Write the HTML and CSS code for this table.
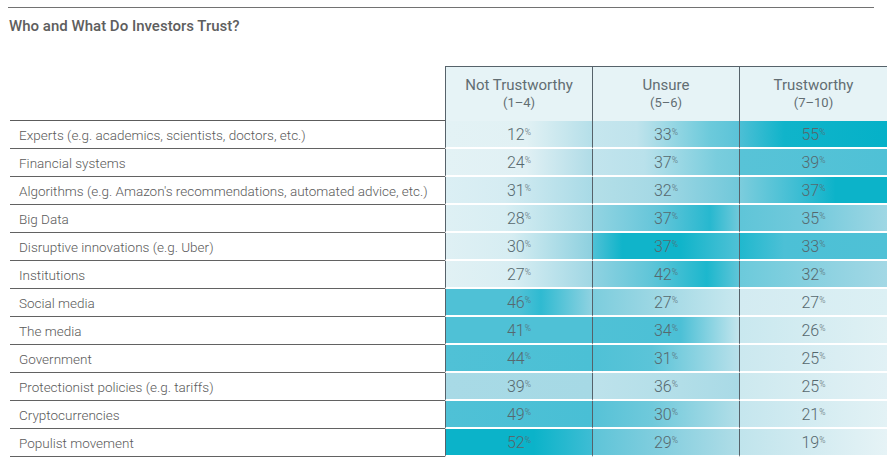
FILE: index.html
```html
<!DOCTYPE html>
<html lang="en">
<head>
<meta charset="utf-8">
<title>Who and What Do Investors Trust?</title>
<link rel="stylesheet" href="styles.css">
</head>
<body>
<div class="page">
  <div class="rule"></div>
  <h1 class="title">Who and What Do Investors Trust?</h1>
  <div class="table">
    <div class="corner"></div>
    <div class="head"><span class="h1">Not Trustworthy</span><span class="h2">(1–4)</span></div>
    <div class="head"><span class="h1">Unsure</span><span class="h2">(5–6)</span></div>
    <div class="head"><span class="h1">Trustworthy</span><span class="h2">(7–10)</span></div>

    <div class="label">Experts (e.g. academics, scientists, doctors, etc.)</div>
    <div class="val" style="background:linear-gradient(90deg,#e3f2f5 0%,#e1f1f4 55%,#b5dfe9 100%)">12<span class="pct">%</span></div>
    <div class="val" style="background:linear-gradient(90deg,#c6e6ee 0%,#bfe3ec 30%,#6ccadb 80%,#5bc3d8 100%)">33<span class="pct">%</span></div>
    <div class="val" style="background:linear-gradient(90deg,#4cbfd5 0%,#10b4ca 30%,#05b1c8 100%)">55<span class="pct">%</span></div>

    <div class="label">Financial systems</div>
    <div class="val" style="background:linear-gradient(90deg,#e3f2f5 0%,#e0f0f4 55%,#b0dce7 100%)">24<span class="pct">%</span></div>
    <div class="val" style="background:linear-gradient(90deg,#c2e4ed 0%,#b9e1eb 35%,#79cddd 85%,#72cadb 100%)">37<span class="pct">%</span></div>
    <div class="val" style="background:linear-gradient(90deg,#58c3d7 0%,#4fc1d6 100%)">39<span class="pct">%</span></div>

    <div class="label">Algorithms (e.g. Amazon's recommendations, automated advice, etc.)</div>
    <div class="val" style="background:linear-gradient(90deg,#dbeff4 0%,#d5ecf2 40%,#a8dae6 100%)">31<span class="pct">%</span></div>
    <div class="val" style="background:linear-gradient(90deg,#b4dfe8 0%,#a6d9e5 40%,#70c8da 100%)">32<span class="pct">%</span></div>
    <div class="val" style="background:linear-gradient(90deg,#7ccddd 0%,#3cbdd3 40%,#0cb3c9 65%,#0cb3c9 100%)">37<span class="pct">%</span></div>

    <div class="label">Big Data</div>
    <div class="val" style="background:linear-gradient(90deg,#def0f4 0%,#d8eef3 40%,#a3d8e4 100%)">28<span class="pct">%</span></div>
    <div class="val" style="background:linear-gradient(90deg,#93d4e2 0%,#63c5d9 45%,#27b8cf 80%,#6fc9db 100%)">37<span class="pct">%</span></div>
    <div class="val" style="background:linear-gradient(90deg,#5fc5d8 0%,#74cadc 50%,#9fd7e4 100%)">35<span class="pct">%</span></div>

    <div class="label">Disruptive innovations (e.g. Uber)</div>
    <div class="val" style="background:linear-gradient(90deg,#dff0f4 0%,#d6edf2 45%,#8dd0df 100%)">30<span class="pct">%</span></div>
    <div class="val" style="background:linear-gradient(90deg,#4fc1d6 0%,#10b4ca 20%,#10b4ca 60%,#4fc1d6 100%)">37<span class="pct">%</span></div>
    <div class="val" style="background:linear-gradient(90deg,#20b8ce 0%,#4cc0d6 30%,#4fc1d6 100%)">33<span class="pct">%</span></div>

    <div class="label">Institutions</div>
    <div class="val" style="background:linear-gradient(90deg,#e1f1f4 0%,#d9eef3 45%,#a0d7e4 100%)">27<span class="pct">%</span></div>
    <div class="val" style="background:linear-gradient(90deg,#8fd2e1 0%,#5fc5d8 40%,#1cb7cd 78%,#5fc5d8 100%)">42<span class="pct">%</span></div>
    <div class="val" style="background:linear-gradient(90deg,#6ccadb 0%,#8ed2e1 60%,#a3d8e5 100%)">32<span class="pct">%</span></div>

    <div class="label">Social media</div>
    <div class="val" style="background:linear-gradient(90deg,#4fc1d6 0%,#4fc1d6 50%,#2fbad1 65%,#8fd2e1 100%)">46<span class="pct">%</span></div>
    <div class="val" style="background:linear-gradient(90deg,#7ccddd 0%,#a3d9e5 50%,#c9e8ef 100%)">27<span class="pct">%</span></div>
    <div class="val" style="background:linear-gradient(90deg,#d3ebf1 0%,#dcf0f4 100%)">27<span class="pct">%</span></div>

    <div class="label">The media</div>
    <div class="val" style="background:linear-gradient(90deg,#4fc1d6 0%,#4fc1d6 100%)">41<span class="pct">%</span></div>
    <div class="val" style="background:linear-gradient(90deg,#4fc1d6 0%,#4cc0d6 60%,#c3e5ed 100%)">34<span class="pct">%</span></div>
    <div class="val" style="background:linear-gradient(90deg,#c9e8ef 0%,#e0f1f4 100%)">26<span class="pct">%</span></div>

    <div class="label">Government</div>
    <div class="val" style="background:linear-gradient(90deg,#50c1d6 0%,#4bc0d5 100%)">44<span class="pct">%</span></div>
    <div class="val" style="background:linear-gradient(90deg,#4fc1d6 0%,#5bc4d8 40%,#b8e0ea 100%)">31<span class="pct">%</span></div>
    <div class="val" style="background:linear-gradient(90deg,#cbe8ef 0%,#e1f1f5 100%)">25<span class="pct">%</span></div>

    <div class="label">Protectionist policies (e.g. tariffs)</div>
    <div class="val" style="background:linear-gradient(90deg,#a8dae6 0%,#a6d9e5 100%)">39<span class="pct">%</span></div>
    <div class="val" style="background:linear-gradient(90deg,#bde2eb 0%,#b2dee8 60%,#a9dae6 100%)">36<span class="pct">%</span></div>
    <div class="val" style="background:linear-gradient(90deg,#cde9ef 0%,#e2f1f5 100%)">25<span class="pct">%</span></div>

    <div class="label">Cryptocurrencies</div>
    <div class="val" style="background:linear-gradient(90deg,#4fc1d6 0%,#49bfd5 100%)">49<span class="pct">%</span></div>
    <div class="val" style="background:linear-gradient(90deg,#56c2d7 0%,#6fc9db 40%,#b2dee8 100%)">30<span class="pct">%</span></div>
    <div class="val" style="background:linear-gradient(90deg,#c5e6ee 0%,#e3f2f5 100%)">21<span class="pct">%</span></div>

    <div class="label">Populist movement</div>
    <div class="val" style="background:linear-gradient(90deg,#0bb3c9 0%,#0bb3c9 60%,#3ebdd4 100%)">52<span class="pct">%</span></div>
    <div class="val" style="background:linear-gradient(90deg,#5ec4d8 0%,#86cfdf 50%,#b0dde7 100%)">29<span class="pct">%</span></div>
    <div class="val" style="background:linear-gradient(90deg,#c0e4ec 0%,#e6f3f6 100%)">19<span class="pct">%</span></div>
  </div>
</div>
</body>
</html>
```
FILE: styles.css
```css
* { box-sizing: border-box; }

html, body {
  margin: 0;
  padding: 0;
  background: #ffffff;
}

body {
  font-family: Roboto, "Liberation Sans", Arial, sans-serif;
  color: #555555;
}

.page {
  width: 894px;
  height: 468px;
  overflow: hidden;
}

.rule {
  margin: 7px 0 0 8px;
  width: 866px;
  height: 1px;
  background: #727272;
}

.title {
  margin: 9px 0 0 9px;
  font-family: "Roboto Medium", Roboto, "Liberation Sans", Arial, sans-serif;
  font-size: 15px;
  line-height: 18px;
  font-weight: 500;
  color: #5e5e5e;
}

.table {
  margin: 31px 0 0 10px;
  display: grid;
  grid-template-columns: 435px 147px 147px 148px;
  grid-template-rows: 55px repeat(12, 28px);
}

.corner {
  border-bottom: 1px solid #5c5c5c;
}

.head {
  background: #e6f3f6;
  border-top: 1px solid #56626a;
  border-left: 1px solid #56626a;
  display: flex;
  flex-direction: column;
  align-items: center;
  padding-top: 9px;
  color: #626d72;
}

.h1 {
  font-size: 15px;
  line-height: 18px;
  font-weight: 400;
}

.h2 {
  font-size: 13px;
  line-height: 17px;
  font-weight: 400;
}

.label {
  border-bottom: 1px solid #626262;
  padding-left: 9px;
  display: flex;
  align-items: center;
  font-size: 13.5px;
  font-weight: 300;
  color: #5a5a5a;
  white-space: nowrap;
}

.val {
  border-left: 1px solid #56626a;
  border-bottom: 2px solid #ffffff;
  text-align: center;
  font-size: 16px;
  font-weight: 300;
  line-height: 26px;
  padding-top: 1px;
  color: #56686e;
}

.pct {
  font-size: 8.5px;
  line-height: 1;
  vertical-align: 5px;
}
```
